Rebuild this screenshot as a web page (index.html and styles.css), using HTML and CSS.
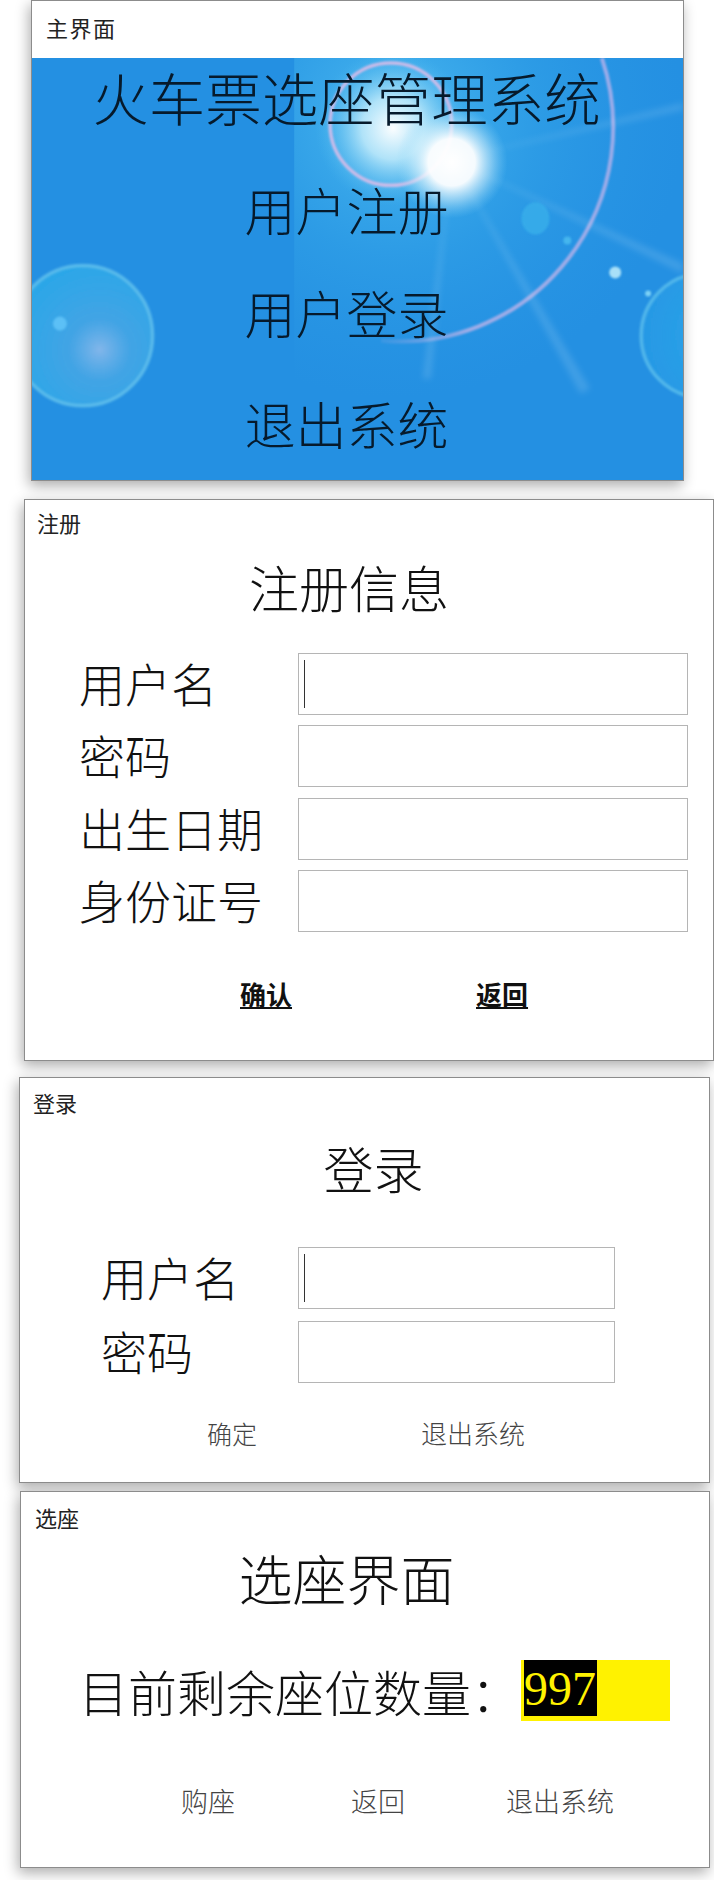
FILE: index.html
```html
<!DOCTYPE html>
<html lang="zh-CN">
<head>
<meta charset="utf-8">
<title>火车票选座管理系统</title>
<link rel="stylesheet" href="styles.css">
</head>
<body>
<section class="win win-main">
  <div class="win-title main-title">主界面</div>
  <div class="main-body">
    <svg class="backdrop" viewBox="0 0 653 421" preserveAspectRatio="none" aria-hidden="true">
      <defs>
        <filter id="soft" x="-20%" y="-20%" width="140%" height="140%"><feGaussianBlur stdDeviation="1"/></filter>
        <filter id="softer" x="-30%" y="-30%" width="160%" height="160%"><feGaussianBlur stdDeviation="3"/></filter>
        <clipPath id="right-side"><rect x="263" width="390" height="421"/></clipPath>
        <radialGradient id="sun">
          <stop offset="0" stop-color="#fff"/>
          <stop offset=".42" stop-color="#fff" stop-opacity=".95"/>
          <stop offset=".7" stop-color="#d5f1fc" stop-opacity=".5"/>
          <stop offset="1" stop-color="#8fd8f8" stop-opacity="0"/>
        </radialGradient>
        <radialGradient id="haze">
          <stop offset="0" stop-color="#fff" stop-opacity=".98"/>
          <stop offset=".4" stop-color="#c4ecfb" stop-opacity=".85"/>
          <stop offset="1" stop-color="#4ab8ef" stop-opacity="0"/>
        </radialGradient>
        <radialGradient id="glow">
          <stop offset="0" stop-color="#55c2f3" stop-opacity=".8"/>
          <stop offset=".5" stop-color="#3cb0ec" stop-opacity=".35"/>
          <stop offset="1" stop-color="#2e9fe7" stop-opacity="0"/>
        </radialGradient>
        <radialGradient id="lens-left" cx=".62" cy=".6" r=".62">
          <stop offset="0" stop-color="#82b6ea"/>
          <stop offset=".35" stop-color="#4aa9e6" stop-opacity=".8"/>
          <stop offset="1" stop-color="#2fb0ea" stop-opacity=".7"/>
        </radialGradient>
        <radialGradient id="lens-right" cx=".7" cy=".5" r=".7">
          <stop offset="0" stop-color="#2ba8ea" stop-opacity=".9"/>
          <stop offset="1" stop-color="#2ba8ea" stop-opacity=".35"/>
        </radialGradient>
        <linearGradient id="arc-fade" gradientUnits="userSpaceOnUse" x1="620" y1="100" x2="350" y2="290">
          <stop offset="0" stop-color="#cdb6ec"/>
          <stop offset=".75" stop-color="#d3b8ea"/>
          <stop offset="1" stop-color="#d3b8ea" stop-opacity=".1"/>
        </linearGradient>
      </defs>
      <rect width="653" height="421" fill="#2490e2"/>
      <g clip-path="url(#right-side)">
        <ellipse cx="365" cy="60" rx="290" ry="280" fill="url(#glow)"/>
        <ellipse cx="362" cy="70" rx="78" ry="78" fill="url(#haze)"/>
      </g>
      <circle cx="360" cy="66" r="61" fill="none" stroke="#e2bde8" stroke-width="3.5" opacity=".85" filter="url(#soft)"/>
      <path d="M571.6 0A214 214 0 0 1 350 282" fill="none" stroke="url(#arc-fade)" stroke-width="4" opacity=".7" filter="url(#soft)"/>
      <g fill="#e6f7fe" opacity=".14" filter="url(#softer)">
        <polygon points="421,101 653,45 653,52"/>
        <polygon points="421,101 560,330 550,335"/>
        <polygon points="421,101 400,320 392,320"/>
        <polygon points="421,101 653,205 653,215"/>
      </g>
      <circle cx="421" cy="104" r="56" fill="url(#sun)"/>
      <ellipse cx="505" cy="160" rx="14" ry="16" fill="#37aeea" opacity=".85" filter="url(#soft)"/>
      <circle cx="537" cy="182" r="4" fill="#45b6ee" filter="url(#soft)"/>
      <circle cx="585" cy="214" r="6" fill="#a8e0f8" filter="url(#soft)"/>
      <circle cx="618" cy="235" r="3" fill="#7ed2f6" filter="url(#soft)"/>
      <circle cx="51" cy="277" r="70" fill="url(#lens-left)" stroke="#69c6ee" stroke-opacity=".7" stroke-width="3.5" filter="url(#soft)"/>
      <circle cx="28" cy="265" r="7" fill="#5cc0f6" filter="url(#soft)"/>
      <circle cx="673" cy="277" r="62" fill="url(#lens-right)" stroke="#63c4ee" stroke-opacity=".7" stroke-width="3.5" filter="url(#soft)"/>
    </svg>
    <h1 class="main-heading">火车票选座管理系统</h1>
    <a class="main-link link-register">用户注册</a>
    <a class="main-link link-login">用户登录</a>
    <a class="main-link link-exit">退出系统</a>
  </div>
</section>

<section class="win win-register">
  <div class="win-title">注册</div>
  <h2 class="heading heading-register">注册信息</h2>
  <div class="form form-register">
    <label class="label">用户名</label><div class="field field-active"></div>
    <label class="label">密码</label><div class="field"></div>
    <label class="label">出生日期</label><div class="field"></div>
    <label class="label">身份证号</label><div class="field"></div>
  </div>
  <div class="actions actions-register">
    <a class="btn btn-bold">确认</a>
    <a class="btn btn-bold">返回</a>
  </div>
</section>

<section class="win win-login">
  <div class="win-title">登录</div>
  <h2 class="heading heading-login">登录</h2>
  <div class="form form-login">
    <label class="label">用户名</label><div class="field field-active"></div>
    <label class="label">密码</label><div class="field"></div>
  </div>
  <div class="actions actions-login">
    <a class="btn">确定</a>
    <a class="btn btn-exit">退出系统</a>
  </div>
</section>

<section class="win win-seat">
  <div class="win-title">选座</div>
  <h2 class="heading heading-seat">选座界面</h2>
  <div class="count-row">
    <span class="count-label">目前剩余座位数量：</span>
    <span class="count-box"><span class="count-value">997</span></span>
  </div>
  <div class="actions actions-seat">
    <a class="btn">购座</a>
    <a class="btn">返回</a>
    <a class="btn">退出系统</a>
  </div>
</section>
</body>
</html>
```
FILE: styles.css
```css
* { box-sizing: border-box; }
html, body { margin: 0; padding: 0; background: #fff; }
body {
  width: 714px;
  height: 1880px;
  overflow: hidden;
  font-family: "Noto Sans CJK SC", "Noto Sans CJK JP", sans-serif;
  font-weight: 300;
  color: #111;
}
.win {
  position: relative;
  background: #fff;
  border: 1px solid #8c8c8c;
  box-shadow: -2px 5px 13px rgba(0, 0, 0, .32);
}
.win-main { width: 653px; height: 481px; margin-left: 31px; }
.win-register { width: 690px; height: 562px; margin: 18px 0 0 24px; }
.win-login { width: 691px; height: 406px; margin: 16px 0 0 19px; }
.win-seat { width: 690px; height: 377px; margin: 8px 0 0 20px; }

.win-title {
  height: 48px;
  line-height: 44px;
  padding-left: 12px;
  font-size: 22px;
  font-weight: 400;
  color: #222;
}
.main-title {
  height: 57px;
  line-height: 52px;
  padding-left: 14px;
  font-size: 22px;
  letter-spacing: 1.5px;
}
.win-login .win-title { height: 52px; line-height: 48px; padding-left: 13px; }
.win-seat .win-title { height: 53px; line-height: 51px; padding-left: 14px; }

.main-body {
  position: relative;
  height: 422px;
  display: flex;
  flex-direction: column;
  align-items: center;
  padding-right: 22px;
}
.backdrop { position: absolute; inset: 0; width: 100%; height: 100%; }
.main-heading, .main-link {
  position: relative;
  margin: 0;
  color: #061a2c;
  font-weight: 300;
  white-space: nowrap;
}
.main-heading { font-size: 56.5px; line-height: 70px; margin-top: 3px; }
.main-link { font-size: 51px; line-height: 64px; }
.link-register { margin-top: 46px; }
.link-login { margin-top: 39px; }
.link-exit { margin-top: 47px; }

.heading {
  margin: 0;
  font-weight: 300;
  color: #111;
  text-align: center;
  white-space: nowrap;
}
.heading-register { font-size: 50px; line-height: 60px; margin-top: 8px; padding-right: 40px; }
.heading-login { font-size: 50px; line-height: 60px; margin-top: 7px; padding-left: 18px; }
.heading-seat { font-size: 54px; line-height: 64px; margin-top: 1px; padding-right: 37px; }

.form {
  display: grid;
  align-items: center;
}
.form-register {
  grid-template-columns: 219px 390px;
  grid-auto-rows: 62px;
  row-gap: 10.4px;
  margin-top: 37px;
  padding-left: 54px;
}
.form-login {
  grid-template-columns: 197px 317px;
  grid-auto-rows: 62px;
  row-gap: 12px;
  margin-top: 50px;
  padding-left: 81px;
}
.label { font-size: 46px; line-height: 58px; padding-bottom: 4px; white-space: nowrap; }
.field {
  position: relative;
  height: 62px;
  border: 1px solid #b5b5b5;
  background: #fff;
}
.field-active::before {
  content: "";
  position: absolute;
  left: 5px;
  top: 6px;
  bottom: 6px;
  width: 1px;
  background: #333;
}

.actions { display: flex; align-items: center; height: 40px; }
.btn { font-size: 25px; line-height: 40px; color: #444; white-space: nowrap; }
.btn-exit { font-size: 26px; }
.btn-bold { font-size: 26px; color: #111; font-weight: 700; text-decoration: underline; }
.actions-register { margin-top: 41.8px; padding-left: 215px; gap: 184px; }
.actions-login { margin-top: 30px; padding-left: 187px; gap: 164px; }
.actions-seat {
  display: grid;
  grid-template-columns: 170px 155px auto;
  margin-top: 60px;
  padding-left: 160px;
}
.actions-seat .btn { font-size: 27px; }

.count-row { display: flex; align-items: flex-start; margin-top: 50px; padding-left: 58px; height: 61px; }
.count-label { font-size: 49px; line-height: 61px; width: 442px; white-space: nowrap; }
.count-box { display: block; width: 149px; height: 61px; background: #fff200; padding-left: 3px; }
.count-value {
  display: block;
  width: 73px;
  height: 56px;
  background: #000;
  color: #fff200;
  font-family: "Liberation Serif", serif;
  font-weight: 400;
  font-size: 48px;
  line-height: 58px;
}
```
